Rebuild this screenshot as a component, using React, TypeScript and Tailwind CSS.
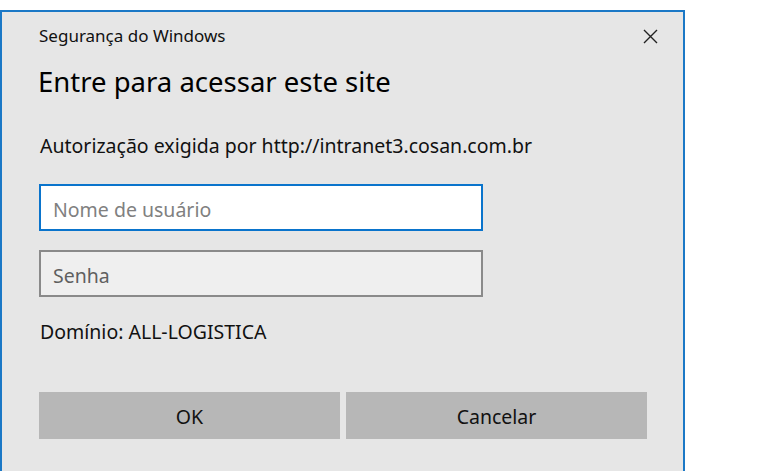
import React from "react";

export default function App() {
  return (
    <div
      className="w-[777px] h-[471px] bg-white overflow-hidden pt-[10px]"
      style={{ fontFamily: '"Noto Sans", "Open Sans", sans-serif' }}
    >
      <div className="w-[685px] h-[470px] border-2 border-b-0 border-[#1b78c6] bg-[#e6e6e6] flex flex-col pl-[37px] pr-[36px]">
        {/* title bar */}
        <div className="flex items-center justify-between mt-[14px] h-[20px]">
          <span className="text-[17px] leading-[20px] text-[#111]">Segurança do Windows</span>
          <svg width="15" height="15" viewBox="0 0 15 15" className="mr-[-11px]">
            <path d="M1 1 L14 14 M14 1 L1 14" stroke="#222" strokeWidth="1.4" />
          </svg>
        </div>

        <h1 className="mt-[18px] h-[36px] leading-[36px] text-[27.5px] text-black -ml-[1px]">
          Entre para acessar este site
        </h1>

        <p className="mt-[33px] h-[26px] leading-[26px] text-[19.5px] text-[#111] ml-[1px]">
          Autorização exigida por http://intranet3.cosan.com.br
        </p>

        <input
          className="mt-[25px] w-[444px] h-[47px] border-2 border-[#0a74cc] bg-white px-[12px] pt-[4px] text-[19.5px] text-[#111] placeholder:text-[#808080] outline-none"
          placeholder="Nome de usuário"
        />

        <div className="mt-[19px] w-[444px] h-[47px] border-2 border-[#8a8a8a] bg-[#efefef] px-[12px] pt-[5px] flex items-center text-[19.5px] text-[#5f5f5f]">
          Senha
        </div>

        <p className="mt-[22px] h-[26px] leading-[26px] text-[19.5px] text-[#111] ml-[1px]">
          Domínio: ALL-LOGISTICA
        </p>

        <div className="mt-[47px] flex gap-[6px]">
          <button className="w-[301px] h-[47px] bg-[#b7b7b7] pt-[2px] text-[19.5px] text-[#111]">OK</button>
          <button className="w-[301px] h-[47px] bg-[#b7b7b7] pt-[2px] text-[19.5px] text-[#111]">Cancelar</button>
        </div>
      </div>
    </div>
  );
}
